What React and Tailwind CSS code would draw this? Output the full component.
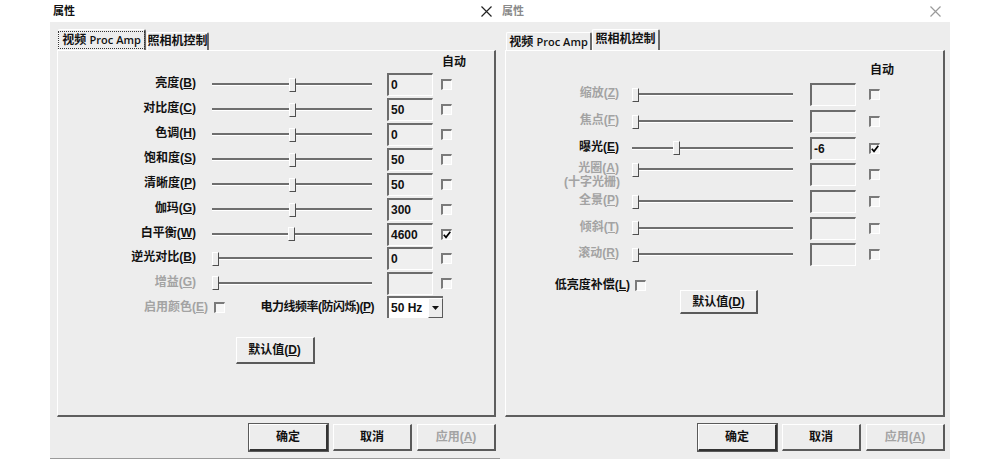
const leftRows = [
  { t: '亮度', k: 'B', pos: 77, val: '0' },
  { t: '对比度', k: 'C', pos: 77, val: '50' },
  { t: '色调', k: 'H', pos: 77, val: '0' },
  { t: '饱和度', k: 'S', pos: 77, val: '50' },
  { t: '清晰度', k: 'P', pos: 77, val: '50' },
  { t: '伽玛', k: 'G', pos: 77, val: '300' },
  { t: '白平衡', k: 'W', pos: 76, val: '4600', checked: true, short: true },
  { t: '逆光对比', k: 'B', pos: 0, val: '0' },
  { t: '增益', k: 'G', pos: 0, val: '', disabled: true, short: true },
];

const rightRows = [
  { t: '缩放', k: 'Z', pos: 0, val: '', disabled: true },
  { t: '焦点', k: 'F', pos: 0, val: '', disabled: true },
  { t: '曝光', k: 'E', pos: 41, val: '-6', checked: true, short: true },
  { t: '光圈', k: 'A', sub: '(十字光栅)', pos: 0, val: '', disabled: true },
  { t: '全景', k: 'P', pos: 0, val: '', disabled: true },
  { t: '倾斜', k: 'T', pos: 0, val: '', disabled: true, short: true },
  { t: '滚动', k: 'R', pos: 0, val: '', disabled: true },
];

function Mn({ t, k }) {
  return (
    <>
      {t}(<u className="underline-offset-[1px]">{k}</u>)
    </>
  );
}

function CloseX({ dim }) {
  return (
    <svg width="11" height="11" viewBox="0 0 11 11" className={dim ? 'text-[#9a9a9a]' : 'text-[#222]'}>
      <path d="M0.5 0.5 L10.5 10.5 M10.5 0.5 L0.5 10.5" stroke="currentColor" strokeWidth="1.2" />
    </svg>
  );
}

function Slider({ pos, wide }) {
  return (
    <div className={`relative flex h-[20px] items-center ${wide ? 'w-[161px]' : 'w-[160px]'}`}>
      <div className="h-[3px] w-full border-b border-white bg-[#6e6e6e]" />
      <div
        className="absolute top-[3px] h-[14px] w-[7px] border-t border-l border-r border-b border-t-white border-l-white border-r-[#4f4f4f] border-b-[#4f4f4f] bg-[#ededed]"
        style={{ left: pos }}
      />
    </div>
  );
}

function Edit({ value }) {
  return (
    <div className="flex h-[23px] w-[46px] items-center border-t-2 border-l-2 border-r border-b border-t-[#6c6c6c] border-l-[#6c6c6c] border-r-white border-b-white bg-[#efefef] pl-[2px] text-[12px] text-[#111]">
      {value}
    </div>
  );
}

function Check({ checked }) {
  return (
    <div className="flex h-[11px] w-[11px] items-center justify-center border-t-2 border-l-2 border-r border-b border-t-[#7a7a7a] border-l-[#7a7a7a] border-r-white border-b-white bg-[#f6f6f6]">
      {checked && (
        <svg width="8" height="8" viewBox="0 0 8 8">
          <path d="M0.8 3.8 L3 6.3 L7.3 0.8" fill="none" stroke="#000" strokeWidth="1.7" />
        </svg>
      )}
    </div>
  );
}

function Btn({ children, def, disabled, w = 'w-[79px]', h = 'h-[27px]' }) {
  return (
    <div
      className={`flex shrink-0 ${w} ${h} items-center justify-center border-t border-l border-r-2 border-b-2 border-t-white border-l-white bg-[#ededed] text-[12px] ${
        def ? 'border-r-[#333] border-b-[#333] outline outline-1 outline-[#5a5a5a]' : 'border-r-[#5a5a5a] border-b-[#5a5a5a]'
      } ${disabled ? 'text-[#a3a3a3]' : 'text-[#111]'}`}
    >
      {children}
    </div>
  );
}

function Tab({ children, selected, focus, w }) {
  return (
    <div
      className={`flex shrink-0 ${w} items-center justify-center whitespace-nowrap border-t border-l border-r-2 border-t-white border-l-white border-r-[#6a6a6a] rounded-t-[2px] bg-[#ededed] text-[12px] text-[#111] ${
        selected ? 'h-[21px] pb-[1px]' : 'h-[18px]'
      }`}
    >
      {focus ? (
        <span className="border border-dotted border-[#333] px-[3px] leading-[15px]">{children}</span>
      ) : (
        <span className="leading-[15px]">{children}</span>
      )}
    </div>
  );
}

function VideoTabLabel() {
  return (
    <>
      视频 <span className="font-['Open_Sans',sans-serif] text-[11px] font-semibold">Proc Amp</span>
    </>
  );
}

function LeftDialog() {
  return (
    <div className="flex w-[450px] shrink-0 flex-col">
      <div className="flex h-[22px] items-center justify-between bg-white pl-[3px] pr-[8px] text-[11px] text-[#111]">
        <span>属性</span>
        <CloseX />
      </div>
      <div className="flex h-[437px] flex-col border-b border-[#9a9a9a] bg-[#ededed] pt-[8px] pl-[7px]">
        <div className="flex h-[20px] items-end pl-[1px]">
          <Tab selected focus w="w-[88px]">
            <VideoTabLabel />
          </Tab>
          <div className="w-[1px] shrink-0" />
          <Tab w="w-[62px]">照相机控制</Tab>
        </div>
        <div className="flex h-[367px] w-[439px] flex-col border-t border-l border-r-2 border-b-2 border-t-white border-l-white border-r-[#5e5e5e] border-b-[#5e5e5e]">
          <div className="flex h-[21px] items-center pl-[384px] text-[12px] text-[#111]">自动</div>
          {leftRows.map((r, i) => (
            <div key={i} className={`flex items-center ${r.short ? 'h-[24px]' : 'h-[25px]'}`}>
              <div className={`w-[138px] pb-[3px] text-right text-[12px] ${r.disabled ? 'text-[#a3a3a3]' : 'text-[#111]'}`}>
                <Mn t={r.t} k={r.k} />
              </div>
              <div className="ml-[16px]">
                <Slider pos={r.pos} />
              </div>
              <div className="ml-[15px]">
                <Edit value={r.val} />
              </div>
              <div className="ml-[8px]">
                <Check checked={r.checked} />
              </div>
            </div>
          ))}
          <div className="flex h-[24px] items-center text-[12px]">
            <div className="w-[150px] text-right text-[#a3a3a3]">
              <Mn t="启用颜色" k="E" />
            </div>
            <div className="ml-[6px]">
              <Check />
            </div>
            <div className="ml-[29px] w-[120px] whitespace-nowrap text-right tracking-[-0.5px] text-[#111]">
              电力线频率(防闪烁)(<u className="underline-offset-[1px]">P</u>)
            </div>
            <div className="ml-[13px] flex h-[22px] w-[56px] border-t-2 border-l-2 border-t-[#6c6c6c] border-l-[#6c6c6c] bg-white">
              <div className="flex flex-1 items-center pl-[2px] text-[#111]">50 Hz</div>
              <div className="flex w-[15px] items-center justify-center border-t border-l border-r border-b border-t-white border-l-white border-r-[#5a5a5a] border-b-[#5a5a5a] bg-[#ededed]">
                <svg width="7" height="4" viewBox="0 0 7 4">
                  <path d="M0 0 H7 L3.5 4 Z" fill="#111" />
                </svg>
              </div>
            </div>
          </div>
          <div className="mt-[18px] flex justify-center pr-[2px]">
            <Btn>
              <Mn t="默认值" k="D" />
            </Btn>
          </div>
        </div>
        <div className="mt-[7px] flex w-[439px] justify-end gap-[5px]">
          <Btn def>确定</Btn>
          <Btn>取消</Btn>
          <Btn disabled>
            应用(<u className="underline-offset-[1px]">A</u>)
          </Btn>
        </div>
      </div>
    </div>
  );
}

function RightDialog() {
  return (
    <div className="flex w-[450px] shrink-0 flex-col">
      <div className="flex h-[22px] items-center justify-between bg-white pl-[2px] pr-[9px] text-[11px] text-[#8a8a8a]">
        <span>属性</span>
        <CloseX dim />
      </div>
      <div className="flex h-[437px] flex-col bg-[#ededed] pt-[8px] pl-[5px]">
        <div className="flex h-[20px] items-end pl-[1px]">
          <Tab w="w-[86px]">
            <VideoTabLabel />
          </Tab>
          <Tab selected w="w-[68px]">照相机控制</Tab>
        </div>
        <div className="flex h-[367px] w-[440px] flex-col border-t border-l border-r-2 border-b-2 border-t-white border-l-white border-r-[#5e5e5e] border-b-[#5e5e5e] pt-[8px]">
          <div className="flex h-[22px] items-center pl-[364px] text-[12px] text-[#111]">自动</div>
          {rightRows.map((r, i) => (
            <div key={i} className={`flex items-center ${r.short ? 'h-[26px]' : 'h-[27px]'}`}>
              <div className={`w-[113px] text-right text-[12px] leading-[14px] ${r.disabled ? 'text-[#a3a3a3]' : 'text-[#111]'} ${r.sub ? 'pb-0' : 'pb-[3px]'}`}>
                <div>
                  <Mn t={r.t} k={r.k} />
                </div>
                {r.sub && <div className="mr-[-1px]">{r.sub}</div>}
              </div>
              <div className={`ml-[13px] ${r.sub ? 'mb-[10px]' : ''}`}>
                <Slider pos={r.pos} wide />
              </div>
              <div className="ml-[17px]">
                <Edit value={r.val} />
              </div>
              <div className="ml-[13px]">
                <Check checked={r.checked} />
              </div>
            </div>
          ))}
          <div className="mt-[9px] flex h-[16px] items-center text-[12px] text-[#111]">
            <div className="w-[124px] text-right">
              <Mn t="低亮度补偿" k="L" />
            </div>
            <div className="ml-[5px]">
              <Check />
            </div>
          </div>
          <div className="mt-[-3px] pl-[174px]">
            <Btn w="w-[78px]" h="h-[24px]">
              <Mn t="默认值" k="D" />
            </Btn>
          </div>
        </div>
        <div className="mt-[7px] flex w-[440px] justify-end gap-[5px]">
          <Btn def>确定</Btn>
          <Btn>取消</Btn>
          <Btn disabled>
            应用(<u className="underline-offset-[1px]">A</u>)
          </Btn>
        </div>
      </div>
    </div>
  );
}

export default function App() {
  return (
    <div className="flex h-[460px] w-[1000px] overflow-hidden bg-white pl-[50px] font-['Liberation_Sans','Noto_Sans_CJK_SC',sans-serif] font-semibold">
      <LeftDialog />
      <RightDialog />
    </div>
  );
}
